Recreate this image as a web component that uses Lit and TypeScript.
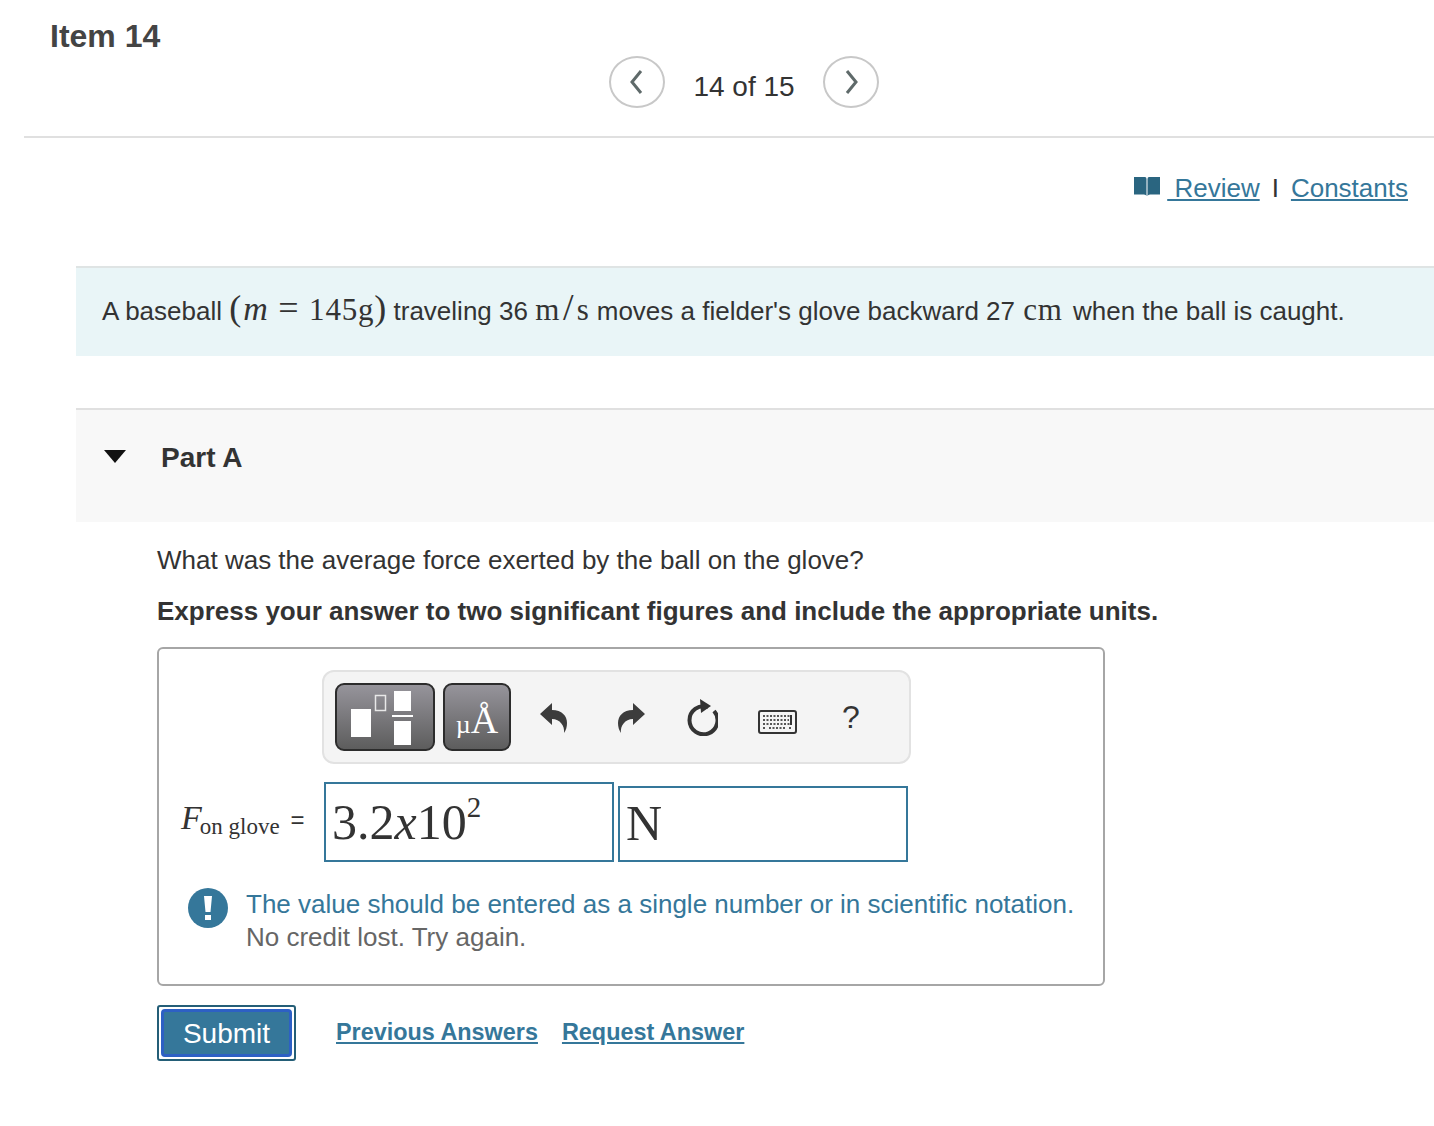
import { LitElement, html, css } from "lit";
import { customElement } from "lit/decorators.js";

@customElement("app-root")
export class AppRoot extends LitElement {
  static styles = css`
    :host { display: block; height: 1126px; overflow: hidden; background: #fff; font-family: "Liberation Sans", Arial, sans-serif; color: #333; font-size: 26px; }
    * { box-sizing: border-box; }
    a { color: #35779a; text-decoration: underline; }
    .title { height: 56px; padding: 18px 0 0 50px; font-size: 32px; font-weight: 700; line-height: 37px; color: #444; }
    .pager { margin-left: 24px; height: 82px; border-bottom: 2px solid #e0e0e0; display: flex; align-items: flex-start; padding-left: 585px; }
    .circle { width: 56px; height: 52px; border: 2px solid #c8c8c8; border-radius: 50%; display: flex; align-items: center; justify-content: center; flex: none; }
    .count { width: 158px; text-align: center; line-height: 62px; font-size: 28px; }
    .links { height: 128px; display: flex; justify-content: flex-end; align-items: flex-start; padding: 33px 26px 0 0; line-height: 34px; }
    .links svg { margin: 6px 7px 0 0; }
    .sep { margin: 0 12px; }
    .banner { margin-left: 76px; height: 90px; background: #e9f5f7; border-top: 2px solid #dfe4e4; padding-left: 26px; line-height: 78px; white-space: nowrap; }
    .m { font-family: "Liberation Serif", serif; font-size: 31px; letter-spacing: 0.800px; }
    .m i { font-size: 34px; letter-spacing: 0; }
    .m .gap { margin: 0 10.500px; font-size: 36px; letter-spacing: 0; }
    .m .p { font-size: 36px; letter-spacing: 0; }
    .m .open { margin-right: 2px; }
    .m .slash { font-size: 38px; margin: 0 3px; letter-spacing: 0; }
    .cm { margin: 0 3px 0 1px; }
    .part { margin: 52px 0 0 76px; height: 114px; background: #f8f8f8; border-top: 2px solid #e0e0e0; display: flex; align-items: flex-start; padding: 29px 0 0 28px; font-size: 28px; font-weight: 700; line-height: 38px; }
    .tri { width: 0; height: 0; border-left: 11px solid transparent; border-right: 11px solid transparent; border-top: 13px solid #111; margin: 11px 35px 0 0; }
    .body { padding-left: 157px; }
    .q { margin-top: 21px; line-height: 34px; }
    .ins { margin-top: 17px; line-height: 34px; font-weight: 700; }
    .box { margin-top: 19px; width: 948px; height: 339px; border: 2px solid #a6a6a6; border-radius: 6px; position: relative; padding: 21px 0 0 163px; }
    .tools { width: 589px; height: 94px; background: #f4f4f4; border: 2px solid #e2e2e2; border-radius: 12px; display: flex; align-items: center; padding-left: 11px; }
    .tb { height: 68px; border: 2px solid #2c2c2c; border-radius: 9px; background: linear-gradient(#96949b, #5d5d5d); display: block; flex: none; }
    .tb svg { display: block; }
    .tb1 { width: 100px; margin-right: 8px; }
    .tb2 { width: 68px; color: #fff; font-family: "Liberation Serif", serif; font-size: 38px; line-height: 70px; text-align: center; white-space: nowrap; }
    .tb2 span { font-size: 26px; }
    .ic { flex: none; }
    .undo { margin: 0 0 0 29px; }
    .redo { margin: 0 0 0 49px; }
    .reload { margin: 0 0 0 39px; }
    .kb { margin: 10px 0 0 40px; }
    .help { font-size: 32px; color: #333; margin-left: 45px; line-height: 40px; }
    .row { display: flex; align-items: flex-start; margin: 18px 0 0 -141px; }
    .lab { font-family: "Liberation Serif", serif; width: 143px; padding-top: 16px; font-size: 23px; line-height: 40px; white-space: nowrap; }
    .lab i { font-size: 34px; margin-right: -2px; }
    .lab .sub { position: relative; top: 5px; }
    .lab .eq { font-family: "Liberation Sans", sans-serif; font-size: 24px; margin-left: 5px; position: relative; top: -1px; }
    .inp { border: 2px solid #35779a; background: #fff; font-family: "Liberation Serif", serif; font-size: 50px; line-height: 70px; color: #333; padding-left: 6px; white-space: nowrap; }
    .i1 { width: 290px; height: 80px; padding-top: 3px; }
    .i2 { width: 290px; height: 76px; margin: 4px 0 0 4px; }
    sup { font-size: 29px; line-height: 0; vertical-align: 22px; }
    .msg { position: absolute; left: 87px; top: 239px; line-height: 33px; color: #666; white-space: nowrap; }
    .msg div:first-child { color: #35779a; }
    .bang { position: absolute; left: 29px; top: 239px; width: 40px; height: 40px; border-radius: 50%; background: #35779a; display: flex; align-items: center; justify-content: center; color: #fff; }
    .actions { display: flex; align-items: flex-start; margin-top: 19px; font-weight: 700; font-size: 23.400px; line-height: 54px; }
    .submit { width: 139px; height: 56px; border: 2px solid #245e77; border-radius: 3px; background: #fff; padding: 2px; flex: none; margin-right: 40px; }
    .submit span { display: block; height: 48px; border: 3px solid #2d60c4; border-radius: 4px; background: #35779a; color: #fff; font-weight: 400; font-size: 28px; line-height: 43px; text-align: center; }
    .actions a + a { margin-left: 24px; }
  `;

  render() {
    return html`
      <div class="title">Item 14</div>
      <div class="pager">
        <span class="circle"><svg width="18" height="26" viewBox="0 0 18 26"><path d="M13 2 L4 13 L13 24" fill="none" stroke="#5f6a6a" stroke-width="3"/></svg></span>
        <span class="count">14 of 15</span>
        <span class="circle"><svg width="18" height="26" viewBox="0 0 18 26"><path d="M5 2 L14 13 L5 24" fill="none" stroke="#5f6a6a" stroke-width="3"/></svg></span>
      </div>
      <div class="links">
        <svg width="26" height="20" viewBox="0 0 26 20"><path d="M0 0 H11 Q12.500 0 12.500 2 V19 Q12 17.500 10 17.500 H0 Z M26 0 H15 Q13.500 0 13.500 2 V19 Q14 17.500 16 17.500 H26 Z" fill="#2a6580"/></svg>
        <a href="#">&nbsp;Review</a><span class="sep">I</span><a href="#">Constants</a>
      </div>
      <div class="banner">A baseball <span class="m"><span class="p open">(</span><i>m</i><span class="gap">=</span>145g<span class="p">)</span></span> traveling 36 <span class="m">m<span class="slash">/</span>s</span> moves a fielder's glove backward 27 <span class="m cm">cm</span> when the ball is caught.</div>
      <div class="part"><span class="tri"></span>Part A</div>
      <div class="body">
        <div class="q">What was the average force exerted by the ball on the glove?</div>
        <div class="ins">Express your answer to two significant figures and include the appropriate units.</div>
        <div class="box">
          <div class="tools">
            <span class="tb tb1"><svg width="96" height="64" viewBox="0 0 96 64"><path d="M14 24 H34 V52 H14 Z M57 6 H74 V26 H57 Z M57 36 H74 V60 H57 Z" fill="#fff"/><path d="M38.500 10.500 H48.500 V25.500 H38.500 Z" fill="none" stroke="#e8e8e8" stroke-width="1.500"/><path d="M55 31 H76" stroke="#fff" stroke-width="2"/></svg></span>
            <span class="tb tb2"><span>µ</span>Å</span>
            <svg class="ic undo" width="28" height="32" viewBox="0 0 28 32"><path d="M0 13 L12 2 V9 C22 9 27 15 27 22 C27 26 26 29 24 32 C25 25 20 18 12 18 V24 Z" fill="#3c3c3c"/></svg>
            <svg class="ic redo" width="28" height="32" viewBox="0 0 28 32"><path d="M28 13 L16 2 V9 C6 9 1 15 1 22 C1 26 2 29 4 32 C3 25 8 18 16 18 V24 Z" fill="#3c3c3c"/></svg>
            <svg class="ic reload" width="34" height="38" viewBox="0 0 34 38"><path d="M24 9 A14 14 0 1 0 30 13" fill="none" stroke="#333" stroke-width="4"/><path d="M16 1 L27 8 L17 15 Z" fill="#333"/></svg>
            <svg class="ic kb" width="39" height="24" viewBox="0 0 39 24"><rect x="1" y="1" width="37" height="22" rx="2" fill="none" stroke="#333" stroke-width="2"/><path d="M5 6 H33 M5 10 H31 M5 14 H33 M5 18 H8 M11 18 H28 M31 18 H34" stroke="#555" stroke-width="2" stroke-dasharray="2 1.500"/><path d="M33 5 V15" stroke="#333" stroke-width="2"/></svg>
            <span class="help">?</span>
          </div>
          <div class="row">
            <div class="lab"><i>F</i><span class="sub">on glove</span> <span class="eq">=</span></div>
            <div class="inp i1">3.2<i>x</i>10<sup>2</sup></div>
            <div class="inp i2">N</div>
          </div>
          <div class="bang"><svg width="10" height="26" viewBox="0 0 10 26"><path d="M1 1 H9 L7.500 17 H2.500 Z M2 20 H8 V25 H2 Z" fill="#fff"/></svg></div>
          <div class="msg"><div>The value should be entered as a single number or in scientific notation.</div><div>No credit lost. Try again.</div></div>
        </div>
        <div class="actions">
          <span class="submit"><span>Submit</span></span>
          <a href="#">Previous Answers</a><a href="#">Request Answer</a>
        </div>
      </div>
    `;
  }
}
